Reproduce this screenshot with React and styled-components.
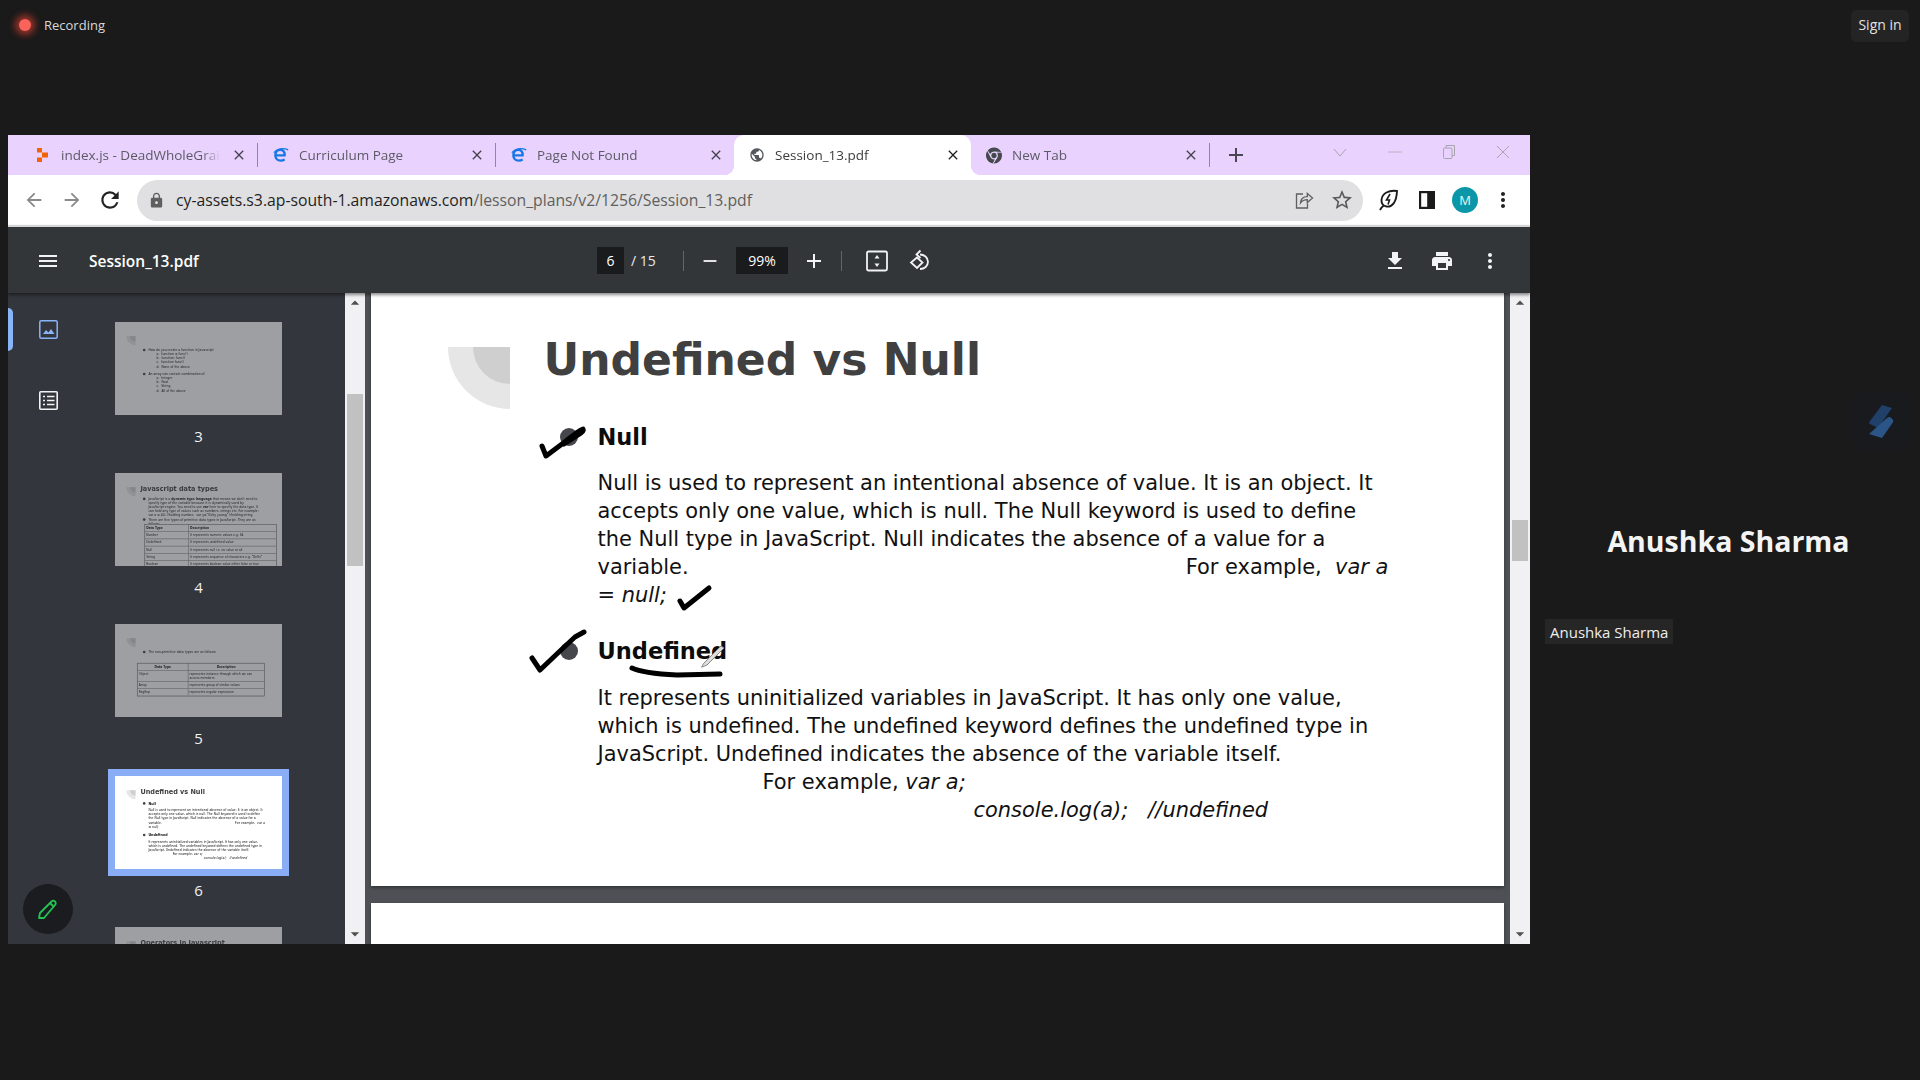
import React from "react";
import styled, { createGlobalStyle } from "styled-components";
import { MdPublic, MdMoreVert, MdFileDownload, MdPrint, MdAdd, MdRemove, MdMenu, MdRefresh, MdArrowBack, MdArrowForward, MdLock, MdStarBorder, MdArrowDropUp, MdArrowDropDown, MdClose } from "react-icons/md";
import { FaChrome } from "react-icons/fa";

const GlobalStyle = createGlobalStyle`
  html, body {
    margin: 0;
    padding: 0;
    background: #1a1a1a;
    overflow: hidden;
  }
  * { box-sizing: border-box; }
`;

const UI_FONT = `"Open Sans", "Noto Sans", sans-serif`;
const DOC_FONT = `"DejaVu Sans", sans-serif`;

// Meeting shell
const Meeting = styled.div`
  width: 1920px;
  height: 1080px;
  background: #1a1a1a;
  font-family: ${UI_FONT};
`;

const TopBar = styled.div`
  height: 135px;
  display: flex;
  justify-content: space-between;
  align-items: flex-start;
  padding: 10px 11px 0 19px;
`;

const RecordingBadge = styled.div`
  display: flex;
  align-items: center;
  gap: 13px;
  height: 30px;
  color: #d8d8d8;
  font-size: 13px;
`;

const RecordingDot = styled.span`
  width: 12px;
  height: 12px;
  border-radius: 50%;
  background: #f8635c;
  box-shadow: 0 0 7px 4px rgba(214, 62, 48, 0.7);
`;

const SignIn = styled.div`
  width: 58px;
  height: 32px;
  padding-bottom: 4px;
  border-radius: 5px;
  background: #242424;
  color: #e2e2e2;
  font-size: 14px;
  display: flex;
  align-items: center;
  justify-content: center;
`;

const Stage = styled.div`
  display: flex;
  padding-left: 8px;
  height: 809px;
`;

const Tile = styled.div`
  position: relative;
  flex: 1;
  display: flex;
  align-items: center;
  justify-content: center;
  padding: 3px 0 0 7px;
`;

const TileName = styled.div`
  color: #f4f4f4;
  font-size: 28.5px;
  font-weight: 700;
`;

const TileLabel = styled.div`
  position: absolute;
  left: 15px;
  top: 484px;
  height: 25px;
  padding: 0 5px;
  display: flex;
  align-items: center;
  background: #262626;
  color: #eee;
  font-size: 15px;
`;

const TileLogo = styled.div`
  position: absolute;
  left: 322px;
  top: 257px;
  width: 58px;
  height: 58px;
  border-radius: 12px;
  background: #181a1e;
  display: flex;
  align-items: center;
  justify-content: center;
`;

// Browser window
const Browser = styled.div`
  position: relative;
  width: 1522px;
  height: 809px;
  flex: none;
  display: flex;
  flex-direction: column;
  overflow: hidden;
  background: #fff;
`;

const TabStrip = styled.div`
  height: 40px;
  flex: none;
  display: flex;
  align-items: flex-end;
  padding-left: 12px;
  background: #e9d3fe;
`;

const Tab = styled.div`
  position: relative;
  width: ${(p) => p.width || 237}px;
  height: 40px;
  flex: none;
  display: flex;
  align-items: center;
  gap: 10px;
  padding: 0 10px 0 15px;
  border-radius: 10px 10px 0 0;
  background: ${(p) => (p.active ? "#fff" : "transparent")};
  color: ${(p) => (p.active ? "#3c3c3c" : "#5d5a66")};
  font-size: 13.5px;

  ${(p) =>
    p.active &&
    `
    &::before, &::after {
      content: "";
      position: absolute;
      bottom: 0;
      width: 10px;
      height: 10px;
    }
    &::before {
      left: -10px;
      background: radial-gradient(circle at 0 0, transparent 10px, #fff 10.5px);
    }
    &::after {
      right: -10px;
      background: radial-gradient(circle at 100% 0, transparent 10px, #fff 10.5px);
    }
  `}
`;

const TabIcon = styled.span`
  width: 16px;
  height: 16px;
  flex: none;
  display: flex;
  align-items: center;
  justify-content: center;
`;

const TabLabel = styled.span`
  flex: 1;
  overflow: hidden;
  white-space: nowrap;
  mask-image: linear-gradient(to right, #000 88%, transparent 100%);
`;

const TabClose = styled.span`
  flex: none;
  display: flex;
  color: ${(p) => (p.active ? "#222" : "#45424c")};
`;

const TabDivider = styled.span`
  width: 1px;
  height: 24px;
  flex: none;
  align-self: center;
  background: ${(p) => (p.hidden ? "transparent" : "#8f8a98")};
`;

const NewTab = styled.span`
  display: flex;
  align-self: center;
  margin-left: 14px;
  color: #4b4752;
`;

const WindowControls = styled.div`
  display: flex;
  align-items: center;
  align-self: flex-start;
  height: 34px;
  margin-left: auto;
  padding-right: 20px;
  gap: 41px;
  color: #a9a3b0;
`;

const NavBar = styled.div`
  height: 50px;
  flex: none;
  display: flex;
  align-items: center;
  padding: 0 0 0 7px;
  background: #fff;
`;

const NavIcon = styled.span`
  display: flex;
  flex: none;
  width: 38px;
  justify-content: center;
  color: ${(p) => p.color || "#222"};
`;

const Omnibox = styled.div`
  width: 1226px;
  height: 41px;
  flex: none;
  margin: 0 7px 0 8px;
  display: flex;
  align-items: center;
  padding: 0 2px 0 11px;
  border-radius: 21px;
  background: #e0dfe1;
`;

const Url = styled.div`
  flex: 1;
  margin-left: 11px;
  font-size: 15.75px;
  color: #5f5f5f;
  white-space: nowrap;
`;

const UrlHost = styled.span`
  color: #1f1f1f;
`;

const Avatar = styled.span`
  width: 26px;
  height: 26px;
  border-radius: 50%;
  background: #0c97a8;
  color: #e8f6f8;
  font-size: 13px;
  display: flex;
  align-items: center;
  justify-content: center;
`;

// PDF viewer
const PdfToolbar = styled.div`
  height: 68px;
  flex: none;
  display: flex;
  align-items: center;
  padding: 1px 0 0 28px;
  border-top: 2px solid #d6d6d6;
  background: #323639;
  color: #fff;
  box-shadow: 0 2px 3px rgba(0, 0, 0, 0.45);
  z-index: 2;
`;

const ToolIcon = styled.span`
  display: flex;
  width: 24px;
  justify-content: center;
  margin-left: ${(p) => p.left || 0}px;
  color: #f1f3f4;
`;

const FileName = styled.div`
  width: 508px;
  margin-left: 29px;
  font-size: 15.5px;
  font-weight: 600;
`;

const PageInput = styled.div`
  width: ${(p) => p.width}px;
  height: 27px;
  margin-left: ${(p) => p.left || 0}px;
  display: flex;
  align-items: center;
  justify-content: center;
  background: #191b1c;
  font-size: 14px;
`;

const PageTotal = styled.div`
  width: 59px;
  padding-left: 7px;
  font-size: 14px;
  color: #e8eaed;
`;

const ToolDivider = styled.span`
  width: 1px;
  height: 20px;
  background: #62666a;
  margin-left: ${(p) => p.left || 0}px;
`;

const PdfBody = styled.div`
  flex: 1;
  display: flex;
  min-height: 0;
`;

const Sidebar = styled.div`
  position: relative;
  width: 337px;
  flex: none;
  display: flex;
  background: #33363c;
  overflow: hidden;
`;

const Rail = styled.div`
  width: 82px;
  flex: none;
  display: flex;
  flex-direction: column;
  align-items: center;
  gap: 52px;
  padding: 27px 2px 0 0;
`;

const RailActive = styled.span`
  position: absolute;
  left: 0;
  top: 15px;
  width: 5px;
  height: 43px;
  border-radius: 0 5px 5px 0;
  background: #8ab4f8;
`;

const ThumbList = styled.div`
  display: flex;
  flex-direction: column;
  padding: 29px 0 0 25px;
`;

const ThumbItem = styled.div`
  width: 167px;
  height: 151.2px;
  flex: none;
`;

const ThumbFrame = styled.div`
  width: 167px;
  height: 93px;
  overflow: hidden;
  background: #fff;
  opacity: ${(p) => (p.selected ? 1 : 0.52)};
  outline: ${(p) => (p.selected ? "7px solid #8aaef5" : "none")};
`;

const ThumbScale = styled.div`
  width: 1133px;
  height: 635px;
  transform: scale(0.1474);
  transform-origin: 0 0;
`;

const ThumbNumber = styled.div`
  margin-top: 11px;
  text-align: center;
  color: #f2f2f2;
  font-size: 15px;
  line-height: 20px;
`;

const PenButton = styled.div`
  position: absolute;
  left: 15px;
  top: 591px;
  width: 50px;
  height: 50px;
  border-radius: 50%;
  background: #1a1c20;
  display: flex;
  align-items: center;
  justify-content: center;
`;

const Scrollbar = styled.div`
  width: 20px;
  flex: none;
  display: flex;
  flex-direction: column;
  align-items: center;
  background: #f1f0f3;
  color: #505050;
  z-index: 1;
`;

const ScrollTrack = styled.div`
  flex: 1;
  width: 100%;
  padding: ${(p) => p.top}px 2px 0;
`;

const ScrollThumb = styled.div`
  height: ${(p) => p.height}px;
  background: #c1c1c1;
`;

const Viewer = styled.div`
  position: relative;
  flex: 1;
  min-width: 0;
  background: #4d5054;
  padding: 0 6px;
  overflow: hidden;
`;

const PageSheet = styled.div`
  position: relative;
  margin-top: ${(p) => p.top}px;
  width: 1133px;
  height: 635px;
  background: #fff;
  box-shadow: 0 2px 3px rgba(0, 0, 0, 0.3);
`;

const InkLayer = styled.svg`
  position: absolute;
  left: 0;
  top: 0;
  width: 1133px;
  height: 635px;
  pointer-events: none;
`;

// Slide contents, shared by the big page and the thumbnails
const Slide = styled.div`
  position: relative;
  width: 1133px;
  height: 635px;
  padding: 81px 0 0 172.5px;
  background: #fff;
  overflow: hidden;
  font-family: ${DOC_FONT};
  color: #111;
`;

const Corner = styled.div`
  position: absolute;
  left: 77px;
  top: 96px;
  width: 62px;
  height: 62px;
  background: #e6e6e6;
  border-bottom-left-radius: 62px;

  &::after {
    content: "";
    position: absolute;
    right: 0;
    top: 0;
    width: 37px;
    height: 37px;
    background: #cfcfcf;
    border-bottom-left-radius: 37px;
  }
`;

const SlideTitle = styled.div`
  height: 56px;
  font-size: 44px;
  line-height: 56px;
  font-weight: 700;
  color: #404040;
  white-space: nowrap;
`;

const Section = styled.div`
  position: relative;
  margin: ${(p) => p.top}px 0 0 54px;
`;

const Bullet = styled.span`
  position: absolute;
  left: -38px;
  top: 5px;
  width: 18px;
  height: 18px;
  border-radius: 50%;
  background: #45474c;
`;

const SectionTitle = styled.div`
  height: 28px;
  font-size: 22.5px;
  line-height: 28px;
  font-weight: 700;
  color: #0c0c0c;
  margin-bottom: ${(p) => p.gap}px;
`;

const Line = styled.div`
  height: 28px;
  font-size: 20.95px;
  line-height: 28px;
  white-space: nowrap;
  padding-left: ${(p) => p.indent || 0}px;
`;

const Spaced = styled.span`
  display: inline-block;
  margin-left: ${(p) => p.left}px;
`;

const DataTable = styled.div`
  position: relative;
  display: grid;
  grid-template-columns: ${(p) => p.cols};
  width: ${(p) => p.width}px;
  margin: ${(p) => p.top}px 0 0 ${(p) => p.left}px;
  border: 3px solid #666;
  background: #fff;
  font-size: 20px;
  line-height: 25px;
`;

const DataCell = styled.div`
  padding: 10px 8px;
  border: 2px solid #777;
  font-weight: ${(p) => (p.head ? 700 : 400)};
  text-align: ${(p) => (p.center && p.head ? "center" : "left")};
`;

const DataTableView = ({ rows, cols, width, left, top, center }) => (
  <DataTable cols={cols} width={width} left={left} top={top}>
    {rows.map((row, i) =>
      row.map((cell, j) => (
        <DataCell key={`${i}-${j}`} head={i === 0} center={center}>
          {cell}
        </DataCell>
      ))
    )}
  </DataTable>
);

const SlideUndefined = () => (
  <Slide>
    <Corner />
    <SlideTitle>Undefined vs Null</SlideTitle>
    <Section top={35}>
      <Bullet />
      <SectionTitle gap={18}>Null</SectionTitle>
      <Line>Null is used to represent an intentional absence of value. It is an object. It</Line>
      <Line>accepts only one value, which is null. The Null keyword is used to define</Line>
      <Line>the Null type in JavaScript. Null indicates the absence of a value for a</Line>
      <Line>
        variable.<Spaced left={497}>For example,&nbsp; <i>var a</i></Spaced>
      </Line>
      <Line><i>= null;</i></Line>
    </Section>
    <Section top={28}>
      <Bullet />
      <SectionTitle gap={19}>Undefined</SectionTitle>
      <Line>It represents uninitialized variables in JavaScript. It has only one value,</Line>
      <Line>which is undefined. The undefined keyword defines the undefined type in</Line>
      <Line>JavaScript. Undefined indicates the absence of the variable itself.</Line>
      <Line indent={165}>For example, <i>var a;</i></Line>
      <Line indent={376}><i>console.log(a);&nbsp;&nbsp; //undefined</i></Line>
    </Section>
  </Slide>
);

const SlideFunctions = () => (
  <Slide>
    <Corner />
    <SlideTitle />
    <Section top={39}>
      <Bullet />
      <Line>How do you create a function in Javascript</Line>
      <Line indent={55}>a.&nbsp; function = func()</Line>
      <Line indent={55}>b.&nbsp; function: func()</Line>
      <Line indent={55}>c.&nbsp; function func()</Line>
      <Line indent={55}>d.&nbsp; None of the above</Line>
    </Section>
    <Section top={23}>
      <Bullet />
      <Line>An array can contain combination of</Line>
      <Line indent={55}>a.&nbsp; Integer</Line>
      <Line indent={55}>b.&nbsp; float</Line>
      <Line indent={55}>c.&nbsp; String</Line>
      <Line indent={55}>d.&nbsp; All of the above</Line>
    </Section>
  </Slide>
);

const primitiveRows = [
  ["Data Type", "Description"],
  ["Number", "It represents numeric values e.g. 54"],
  ["Undefined", "It represents undefined value"],
  ["Null", "It represents null i.e. no value at all"],
  ["String", "It represents sequence of characters e.g. \"Delhi\""],
  ["Boolean", "It represents boolean value either false or true"],
];

const SlideTypes = () => (
  <Slide>
    <Corner />
    <SlideTitle>Javascript data types</SlideTitle>
    <Section top={25}>
      <Bullet />
      <Line>JavaScript is a <b>dynamic type language</b> that means we don't need to</Line>
      <Line>specify type of the variable because it is dynamically used by</Line>
      <Line>JavaScript engine. You need to use <b>var</b> here to specify the data type. It</Line>
      <Line>can hold any type of values such as numbers, strings etc. For example:</Line>
      <Line>var a = 40; //holding number,&nbsp; var y="Vicky young" //holding string</Line>
    </Section>
    <Section top={0}>
      <Bullet />
      <Line>There are five types of primitive data types in JavaScript. They are as</Line>
      <Line>follows:</Line>
    </Section>
    <DataTableView rows={primitiveRows} cols="1fr 2fr" width={900} left={26} top={-12} />
  </Slide>
);

const nonPrimitiveRows = [
  ["Data Type", "Description"],
  ["Object", "represents instance through which we can access members"],
  ["Array", "represents group of similar values"],
  ["RegExp", "represents regular expression"],
];

const SlideNonPrimitive = () => (
  <Slide>
    <Corner />
    <SlideTitle />
    <Section top={39}>
      <Bullet />
      <Line>The non-primitive data types are as follows:</Line>
    </Section>
    <DataTableView rows={nonPrimitiveRows} cols="2fr 3fr" width={867} left={-24} top={60} center />
  </Slide>
);

const SlideOperators = () => (
  <Slide>
    <Corner />
    <SlideTitle>Operators in Javascript</SlideTitle>
  </Slide>
);

const thumbs = [
  { n: 3, Body: SlideFunctions },
  { n: 4, Body: SlideTypes },
  { n: 5, Body: SlideNonPrimitive },
  { n: 6, Body: SlideUndefined, selected: true },
  { n: 7, Body: SlideOperators },
];

// Icons drawn by hand
const ReplitIcon = () => (
  <svg width="16" height="16" viewBox="0 0 16 16">
    <path d="M2 1h5v4.500H2z" fill="#f26207" />
    <path d="M7 5.500h6v5H7z" fill="#f26207" />
    <path d="M2 10.500h5V15H2z" fill="#f26207" />
  </svg>
);

const EdgeE = () => (
  <svg width="20" height="18" viewBox="0 0 20 18" fill="none" stroke="#1678e6">
    <path d="M3 9.500h11.500C15 5 12.500 2.500 9.200 2.500 5.500 2.500 3 5.500 3 9.500s2.800 6.500 6.500 6.500c2 0 3.800-.6 5-1.600" strokeWidth="3" />
    <path d="M1 6C5 .8 13 -.4 19 2.600" strokeWidth="1.600" />
  </svg>
);

const RestoreIcon = () => (
  <svg width="12" height="14" viewBox="0 0 12 14" fill="none" stroke="#a9a3b0" strokeWidth="1">
    <path d="M3 3V.5h8.500v10H9" />
    <rect x=".5" y="3" width="8.500" height="10.500" rx="1" />
  </svg>
);

const ChevronThin = () => (
  <svg width="14" height="9" viewBox="0 0 14 9" fill="none" stroke="#a9a3b0">
    <path d="M1 1l6 7 6-7" />
  </svg>
);

const MinIcon = () => (
  <svg width="14" height="2" viewBox="0 0 14 2"><path d="M0 1h14" stroke="#b8b2bf" /></svg>
);

const CloseThin = () => (
  <svg width="14" height="14" viewBox="0 0 14 14" fill="none" stroke="#a9a3b0">
    <path d="M1 1l12 12M13 1L1 13" />
  </svg>
);

const ShareIcon = () => (
  <svg width="20" height="20" viewBox="0 0 20 20" fill="none" stroke="#5f5f5f" strokeWidth="1.300">
    <path d="M9 4H2.500v14h11v-4.500" />
    <path d="M6.500 13c.3-4 3-6.300 6.800-6.300V3.500L18.500 8l-5.200 4.500V9.700c-3 0-5.200 1-6.800 3.300z" />
  </svg>
);

const LeafBolt = () => (
  <svg width="20" height="22" viewBox="0 0 20 22" fill="none" stroke="#1b1b1b" strokeWidth="1.900">
    <path d="M18 2C10 1 3 4 2.500 11c-.2 3 1.500 6 5 6.500 5.500.8 10-4 10.500-15.500z" />
    <path d="M11 5l-3.500 6h3l-1.500 4.500" strokeWidth="1.600" />
    <path d="M1 21c1-2 2-3 3.500-4.200" />
  </svg>
);

const SidePanel = () => (
  <svg width="16" height="18" viewBox="0 0 16 18">
    <path d="M0 0h16v18H0z" fill="#1b1b1b" />
    <path d="M2.200 2.200h6v13.600h-6z" fill="#fff" />
  </svg>
);

const FitPage = () => (
  <svg width="22" height="22" viewBox="0 0 22 22" fill="none" stroke="#f1f3f4" strokeWidth="1.800">
    <rect x="1" y="1.500" width="20" height="19" rx="1.500" />
    <path d="M11 5l-2.500 3.500h5zM11 17l-2.500-3.500h5z" fill="#f1f3f4" stroke="none" />
  </svg>
);

const RotateIcon = () => (
  <svg width="24" height="24" viewBox="0 0 24 24" fill="none" stroke="#f1f3f4" strokeWidth="1.800">
    <path d="M12 5.500c4 0 8 3 8 7.300 0 4.200-3.500 7.200-8 7.200" />
    <path d="M12.500 1.500L8.500 5.500l4 3.500" />
    <path d="M9 8.500l-6 5 6 5.500 5.500-5.500z" />
  </svg>
);

const PhotoIcon = () => (
  <svg width="19" height="19" viewBox="0 0 19 19" fill="none" stroke="#8ab4f8" strokeWidth="1.500">
    <rect x=".8" y=".8" width="17.400" height="17.400" rx="1.500" />
    <path d="M4 14l3-4 2.500 2.500L12 9l3.500 5z" fill="#8ab4f8" stroke="none" />
  </svg>
);

const OutlineIcon = () => (
  <svg width="19" height="19" viewBox="0 0 19 19" fill="none" stroke="#f1f3f4" strokeWidth="1.600">
    <rect x=".8" y=".8" width="17.400" height="17.400" rx="1" />
    <path d="M4 5.500h2M8 5.500h7.500M4 9.500h2M8 9.500h7.500M4 13.500h2M8 13.500h7.500" />
  </svg>
);

const PencilIcon = () => (
  <svg width="22" height="22" viewBox="0 0 22 22" fill="none" stroke="#23c552" strokeWidth="1.800" strokeLinejoin="round">
    <path d="M2 20l1-5L14.500 3.500c1-1 2.500-1 3.500 0s1 2.500 0 3.500L7 20z" />
    <path d="M13 5l4 4" />
  </svg>
);

const MeetingLogo = () => (
  <svg width="28" height="36" viewBox="0 0 28 36">
    <path d="M15 2l10 3-14 20-8-4c-1-1-1-2 0-3z" fill="#20406a" />
    <path d="M20 15c2-2 4-1 6 2 .5 1 .3 2-.5 3L15 35 2 31z" fill="#2b5587" />
  </svg>
);

const tabs = [
  { title: "index.js - DeadWholeGrain", icon: <ReplitIcon />, divider: true },
  { title: "Curriculum Page", icon: <EdgeE />, divider: true },
  { title: "Page Not Found", icon: <EdgeE />, divider: false, width: 238 },
  { title: "Session_13.pdf", icon: <MdPublic size={20} color="#54585c" />, active: true, divider: false },
  { title: "New Tab", icon: <FaChrome size={17} color="#45484d" />, divider: true, width: 238 },
];

const App = () => {
  return (
    <Meeting>
      <GlobalStyle />
      <TopBar>
        <RecordingBadge>
          <RecordingDot />
          Recording
        </RecordingBadge>
        <SignIn>Sign in</SignIn>
      </TopBar>
      <Stage>
        <Browser>
          <TabStrip>
            {tabs.map((tab) => (
              <React.Fragment key={tab.title}>
                <Tab active={tab.active} width={tab.width}>
                  <TabIcon>{tab.icon}</TabIcon>
                  <TabLabel>{tab.title}</TabLabel>
                  <TabClose active={tab.active}>
                    <MdClose size={16} />
                  </TabClose>
                </Tab>
                <TabDivider hidden={!tab.divider} />
              </React.Fragment>
            ))}
            <NewTab>
              <MdAdd size={24} />
            </NewTab>
            <WindowControls>
              <ChevronThin />
              <MinIcon />
              <RestoreIcon />
              <CloseThin />
            </WindowControls>
          </TabStrip>
          <NavBar>
            <NavIcon color="#8a8a8a"><MdArrowBack size={22} /></NavIcon>
            <NavIcon color="#8a8a8a"><MdArrowForward size={22} /></NavIcon>
            <NavIcon><MdRefresh size={26} /></NavIcon>
            <Omnibox>
              <MdLock size={17} color="#5f5f5f" />
              <Url>
                <UrlHost>cy-assets.s3.ap-south-1.amazonaws.com</UrlHost>/lesson_plans/v2/1256/Session_13.pdf
              </Url>
              <NavIcon><ShareIcon /></NavIcon>
              <NavIcon color="#5a5a5a"><MdStarBorder size={24} /></NavIcon>
            </Omnibox>
            <NavIcon><LeafBolt /></NavIcon>
            <NavIcon><SidePanel /></NavIcon>
            <NavIcon><Avatar>M</Avatar></NavIcon>
            <NavIcon><MdMoreVert size={24} /></NavIcon>
          </NavBar>
          <PdfToolbar>
            <ToolIcon><MdMenu size={26} /></ToolIcon>
            <FileName>Session_13.pdf</FileName>
            <PageInput width={27}>6</PageInput>
            <PageTotal>/ 15</PageTotal>
            <ToolDivider />
            <ToolIcon left={14}><MdRemove size={22} /></ToolIcon>
            <PageInput width={52} left={14}>99%</PageInput>
            <ToolIcon left={14}><MdAdd size={24} /></ToolIcon>
            <ToolDivider left={15} />
            <ToolIcon left={23}><FitPage /></ToolIcon>
            <ToolIcon left={19}><RotateIcon /></ToolIcon>
            <ToolIcon left={451}><MdFileDownload size={26} /></ToolIcon>
            <ToolIcon left={23}><MdPrint size={26} /></ToolIcon>
            <ToolIcon left={24}><MdMoreVert size={24} /></ToolIcon>
          </PdfToolbar>
          <PdfBody>
            <Sidebar>
              <Rail>
                <RailActive />
                <PhotoIcon />
                <OutlineIcon />
              </Rail>
              <ThumbList>
                {thumbs.map(({ n, Body, selected }) => (
                  <ThumbItem key={n}>
                    <ThumbFrame selected={selected}>
                      <ThumbScale>
                        <Body />
                      </ThumbScale>
                    </ThumbFrame>
                    <ThumbNumber>{n}</ThumbNumber>
                  </ThumbItem>
                ))}
              </ThumbList>
              <PenButton>
                <PencilIcon />
              </PenButton>
            </Sidebar>
            <Scrollbar>
              <MdArrowDropUp size={20} />
              <ScrollTrack top={81}>
                <ScrollThumb height={172} />
              </ScrollTrack>
              <MdArrowDropDown size={20} />
            </Scrollbar>
            <Viewer>
              <PageSheet top={-42}>
                <SlideUndefined />
                <InkLayer viewBox="0 0 1133 635" fill="none" stroke="#000" strokeLinecap="round" strokeLinejoin="round">
                  <path d="M171 195l4 10 20-15c6-5 12-10 17-12 1 2-2 4-5 6l-14 9" strokeWidth="5" />
                  <path d="M309 350l4 7 25-20" strokeWidth="5" />
                  <path d="M161 407l8 12 20-19 15-14 9-5" strokeWidth="5" />
                  <path d="M261 417c8 4 25 6 45 7l43-1" strokeWidth="5" />
                  <path d="M333 412l17-17 3 2-17 17-5 2z" fill="#ddd" stroke="#888" strokeWidth="1" />
                </InkLayer>
              </PageSheet>
              <PageSheet top={17} />
            </Viewer>
            <Scrollbar>
              <MdArrowDropUp size={20} />
              <ScrollTrack top={207}>
                <ScrollThumb height={41} />
              </ScrollTrack>
              <MdArrowDropDown size={20} />
            </Scrollbar>
          </PdfBody>
        </Browser>
        <Tile>
          <TileName>Anushka Sharma</TileName>
          <TileLabel>Anushka Sharma</TileLabel>
          <TileLogo>
            <MeetingLogo />
          </TileLogo>
        </Tile>
      </Stage>
    </Meeting>
  );
};

export default App;
